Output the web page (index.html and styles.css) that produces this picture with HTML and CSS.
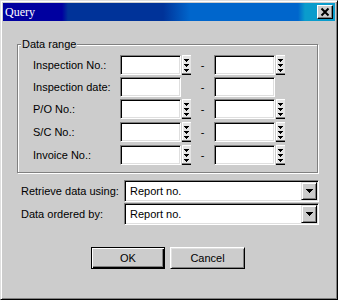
FILE: index.html
```html
<!DOCTYPE html>
<html>
<head>
<meta charset="utf-8">
<link rel="stylesheet" href="styles.css">
</head>
<body>
<div class="window">
  <div class="titlebar">
    <span class="title">Query</span>
    <button class="close"><svg width="14" height="12" viewBox="0 0 14 12"><path d="M3.5 2.5 L10.5 9.5 M10.5 2.5 L3.5 9.5" stroke="#000" stroke-width="2" fill="none"/></svg></button>
  </div>
  <fieldset class="group">
    <legend>Data range</legend>
    <div class="row">
      <span class="label">Inspection No.:</span>
      <span class="field"></span>
      <span class="spin"><svg width="9" height="20" viewBox="0 0 9 20" shape-rendering="crispEdges"><rect width="9" height="20" fill="#e4e4e4"/><rect width="9" height="1" fill="#fff"/><rect width="1" height="18" fill="#fff"/><rect y="18" width="9" height="1" fill="#808080"/><rect y="19" width="9" height="1" fill="#000"/><path d="M2 4h5v1H2zM3 5h3v1H3zM4 6h1v1H4zM2 9h5v1H2zM3 10h3v1H3zM4 11h1v1H4zM2 14h5v1H2zM3 15h3v1H3zM4 16h1v1H4z" fill="#000"/></svg></span>
      <span class="dash">-</span>
      <span class="field"></span>
      <span class="spin"><svg width="9" height="20" viewBox="0 0 9 20" shape-rendering="crispEdges"><rect width="9" height="20" fill="#e4e4e4"/><rect width="9" height="1" fill="#fff"/><rect width="1" height="18" fill="#fff"/><rect y="18" width="9" height="1" fill="#808080"/><rect y="19" width="9" height="1" fill="#000"/><path d="M2 4h5v1H2zM3 5h3v1H3zM4 6h1v1H4zM2 9h5v1H2zM3 10h3v1H3zM4 11h1v1H4zM2 14h5v1H2zM3 15h3v1H3zM4 16h1v1H4z" fill="#000"/></svg></span>
    </div>
    <div class="row">
      <span class="label">Inspection date:</span>
      <span class="field"></span>
      <span class="nospin"></span>
      <span class="dash">-</span>
      <span class="field"></span>
    </div>
    <div class="row">
      <span class="label">P/O No.:</span>
      <span class="field"></span>
      <span class="spin"><svg width="9" height="20" viewBox="0 0 9 20" shape-rendering="crispEdges"><rect width="9" height="20" fill="#e4e4e4"/><rect width="9" height="1" fill="#fff"/><rect width="1" height="18" fill="#fff"/><rect y="18" width="9" height="1" fill="#808080"/><rect y="19" width="9" height="1" fill="#000"/><path d="M2 4h5v1H2zM3 5h3v1H3zM4 6h1v1H4zM2 9h5v1H2zM3 10h3v1H3zM4 11h1v1H4zM2 14h5v1H2zM3 15h3v1H3zM4 16h1v1H4z" fill="#000"/></svg></span>
      <span class="dash">-</span>
      <span class="field"></span>
      <span class="spin"><svg width="9" height="20" viewBox="0 0 9 20" shape-rendering="crispEdges"><rect width="9" height="20" fill="#e4e4e4"/><rect width="9" height="1" fill="#fff"/><rect width="1" height="18" fill="#fff"/><rect y="18" width="9" height="1" fill="#808080"/><rect y="19" width="9" height="1" fill="#000"/><path d="M2 4h5v1H2zM3 5h3v1H3zM4 6h1v1H4zM2 9h5v1H2zM3 10h3v1H3zM4 11h1v1H4zM2 14h5v1H2zM3 15h3v1H3zM4 16h1v1H4z" fill="#000"/></svg></span>
    </div>
    <div class="row far">
      <span class="label">S/C No.:</span>
      <span class="field"></span>
      <span class="spin"><svg width="9" height="20" viewBox="0 0 9 20" shape-rendering="crispEdges"><rect width="9" height="20" fill="#e4e4e4"/><rect width="9" height="1" fill="#fff"/><rect width="1" height="18" fill="#fff"/><rect y="18" width="9" height="1" fill="#808080"/><rect y="19" width="9" height="1" fill="#000"/><path d="M2 4h5v1H2zM3 5h3v1H3zM4 6h1v1H4zM2 9h5v1H2zM3 10h3v1H3zM4 11h1v1H4zM2 14h5v1H2zM3 15h3v1H3zM4 16h1v1H4z" fill="#000"/></svg></span>
      <span class="dash">-</span>
      <span class="field"></span>
      <span class="spin"><svg width="9" height="20" viewBox="0 0 9 20" shape-rendering="crispEdges"><rect width="9" height="20" fill="#e4e4e4"/><rect width="9" height="1" fill="#fff"/><rect width="1" height="18" fill="#fff"/><rect y="18" width="9" height="1" fill="#808080"/><rect y="19" width="9" height="1" fill="#000"/><path d="M2 4h5v1H2zM3 5h3v1H3zM4 6h1v1H4zM2 9h5v1H2zM3 10h3v1H3zM4 11h1v1H4zM2 14h5v1H2zM3 15h3v1H3zM4 16h1v1H4z" fill="#000"/></svg></span>
    </div>
    <div class="row far">
      <span class="label">Invoice No.:</span>
      <span class="field"></span>
      <span class="spin"><svg width="9" height="20" viewBox="0 0 9 20" shape-rendering="crispEdges"><rect width="9" height="20" fill="#e4e4e4"/><rect width="9" height="1" fill="#fff"/><rect width="1" height="18" fill="#fff"/><rect y="18" width="9" height="1" fill="#808080"/><rect y="19" width="9" height="1" fill="#000"/><path d="M2 4h5v1H2zM3 5h3v1H3zM4 6h1v1H4zM2 9h5v1H2zM3 10h3v1H3zM4 11h1v1H4zM2 14h5v1H2zM3 15h3v1H3zM4 16h1v1H4z" fill="#000"/></svg></span>
      <span class="dash">-</span>
      <span class="field"></span>
      <span class="spin"><svg width="9" height="20" viewBox="0 0 9 20" shape-rendering="crispEdges"><rect width="9" height="20" fill="#e4e4e4"/><rect width="9" height="1" fill="#fff"/><rect width="1" height="18" fill="#fff"/><rect y="18" width="9" height="1" fill="#808080"/><rect y="19" width="9" height="1" fill="#000"/><path d="M2 4h5v1H2zM3 5h3v1H3zM4 6h1v1H4zM2 9h5v1H2zM3 10h3v1H3zM4 11h1v1H4zM2 14h5v1H2zM3 15h3v1H3zM4 16h1v1H4z" fill="#000"/></svg></span>
    </div>
  </fieldset>
  <div class="crow first">
    <span class="clabel">Retrieve data using:</span>
    <div class="combo">
      <span class="ctext">Report no.</span>
      <span class="drop"><svg width="7" height="4" viewBox="0 0 7 4" shape-rendering="crispEdges"><path d="M0 0h7v1H0zM1 1h5v1H1zM2 2h3v1H2zM3 3h1v1H3z" fill="#000"/></svg></span>
    </div>
  </div>
  <div class="crow">
    <span class="clabel">Data ordered by:</span>
    <div class="combo">
      <span class="ctext">Report no.</span>
      <span class="drop"><svg width="7" height="4" viewBox="0 0 7 4" shape-rendering="crispEdges"><path d="M0 0h7v1H0zM1 1h5v1H1zM2 2h3v1H2zM3 3h1v1H3z" fill="#000"/></svg></span>
    </div>
  </div>
  <div class="buttons">
    <button class="btn default">OK</button>
    <button class="btn cancel">Cancel</button>
  </div>
</div>
</body>
</html>
```
FILE: styles.css
```css
html, body {
  margin: 0;
  padding: 0;
}
body {
  background: #cccccc;
  font-family: "Liberation Sans", Arial, sans-serif;
  font-size: 11px;
  color: #000;
}
.window {
  width: 338px;
  height: 300px;
  box-sizing: border-box;
  border: 1px solid;
  border-color: #dfdfdf #000 #000 #dfdfdf;
  box-shadow: inset 1px 1px #fff, inset -1px -1px #808080;
  padding: 2px;
  background: #cccccc;
  display: flex;
  flex-direction: column;
  overflow: hidden;
}
.titlebar {
  height: 18px;
  flex: none;
  display: flex;
  align-items: center;
  padding-left: 2px;
  background: linear-gradient(to right,
    #0000a0 0, #0000a0 59px,
    #003399 65px, #003399 160px,
    #0066cc 187px, #0066cc 295px,
    #0a9ccc 302px, #0a9ccc 100%);
  color: #fff;
}
.title {
  font-family: "Liberation Serif", "Times New Roman", serif;
  font-size: 12px;
  line-height: 14px;
}
.close {
  margin-left: auto;
  margin-right: 2px;
  width: 16px;
  height: 14px;
  padding: 0;
  box-sizing: border-box;
  border: 1px solid;
  border-color: #fff #000 #000 #fff;
  box-shadow: inset -1px -1px #808080;
  background: #cccccc;
  display: flex;
  align-items: center;
  justify-content: center;
}
.close svg {
  display: block;
}
.group {
  margin: 17px 0 0 14px;
  width: 301px;
  box-sizing: border-box;
  border: 1px solid #808080;
  box-shadow: inset 1px 1px #fff, 1px 1px #fff;
  padding: 4px 0 7px 3px;
  min-width: 0;
}
.group legend {
  padding: 0 1px;
  font-size: 11px;
  line-height: 13px;
  background: #cccccc;
}
.row {
  display: flex;
  align-items: center;
  height: 20px;
  margin-left: 12px;
}
.row + .row {
  margin-top: 2px;
}
.row.far {
  margin-top: 3px;
}
.label {
  width: 87px;
  flex: none;
  line-height: 20px;
  white-space: nowrap;
}
.field {
  width: 61px;
  height: 20px;
  flex: none;
  box-sizing: border-box;
  background: #fff;
  border: 1px solid;
  border-color: #808080 #fff #fff #808080;
  box-shadow: inset 1px 1px #000, inset -1px -1px #dfdfdf;
}
.spin {
  width: 9px;
  height: 20px;
  margin-left: 1px;
  flex: none;
}
.spin svg {
  display: block;
}
.nospin {
  width: 10px;
  flex: none;
}
.dash {
  width: 23px;
  flex: none;
  text-align: center;
  line-height: 20px;
}
.crow {
  display: flex;
  align-items: center;
  height: 22px;
  margin-left: 18px;
  margin-top: 1px;
}
.crow.first {
  margin-top: 7px;
}
.clabel {
  width: 103px;
  flex: none;
  white-space: nowrap;
}
.combo {
  width: 195px;
  height: 22px;
  box-sizing: border-box;
  background: #fff;
  border: 1px solid;
  border-color: #808080 #fff #fff #808080;
  box-shadow: inset 1px 1px #000, inset -1px -1px #dfdfdf;
  display: flex;
  align-items: center;
  padding-left: 5px;
}
.ctext {
  flex: 1;
}
.drop {
  width: 16px;
  height: 18px;
  margin-right: 1px;
  box-sizing: border-box;
  background: #cccccc;
  border: 1px solid;
  border-color: #dfdfdf #000 #000 #dfdfdf;
  box-shadow: inset 1px 1px #fff, inset -1px -1px #808080;
  display: flex;
  align-items: center;
  justify-content: center;
}
.drop svg {
  display: block;
}
.buttons {
  display: flex;
  gap: 5px;
  margin-top: 22px;
  margin-left: 88px;
}
.btn {
  height: 22px;
  padding: 0;
  box-sizing: border-box;
  background: #cccccc;
  font-family: "Liberation Sans", Arial, sans-serif;
  font-size: 11px;
  color: #000;
}
.btn.default {
  width: 74px;
  border: 1px solid #000;
  box-shadow: inset 1px 1px #fff, inset -1px -1px #000, inset -2px -2px #808080;
}
.btn.cancel {
  width: 75px;
  border: 1px solid;
  border-color: #fff #000 #000 #fff;
  box-shadow: inset 1px 1px #dfdfdf, inset -1px -1px #808080;
}
```
